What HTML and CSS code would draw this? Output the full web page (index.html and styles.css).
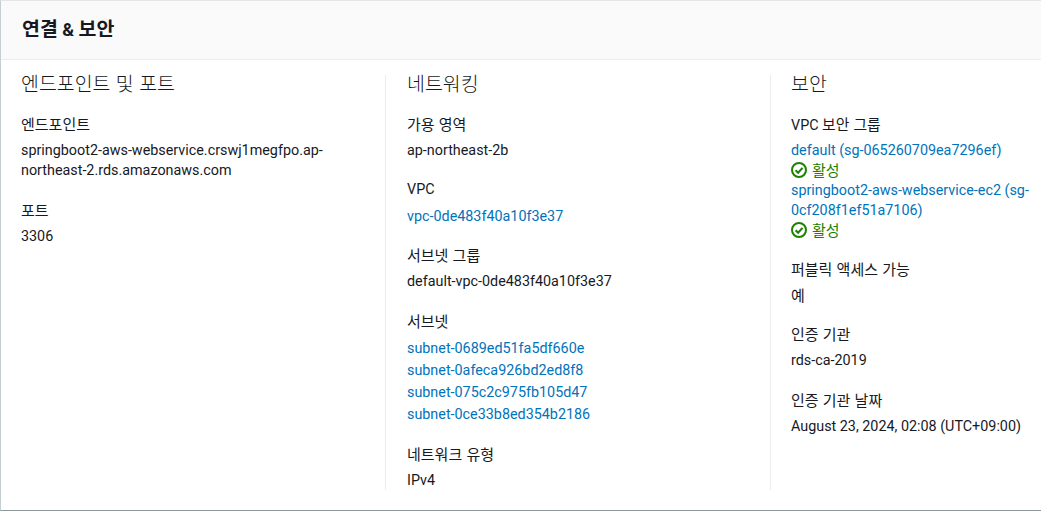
FILE: index.html
```html
<!DOCTYPE html>
<html lang="ko">
<head>
<meta charset="utf-8">
<title>연결 &amp; 보안</title>
<link rel="stylesheet" href="styles.css">
</head>
<body>
<section class="card">
  <header class="card-header"><h2><span class="ko">연결</span> &amp; <span class="ko">보안</span></h2></header>
  <div class="columns">
    <div class="col col-1">
      <h3><span class="ko">엔드포인트 및 포트</span></h3>
      <div class="field"><div class="label ko">엔드포인트</div><div class="value">springboot2-aws-webservice.crswj1megfpo.ap-northeast-2.rds.amazonaws.com</div></div>
      <div class="field"><div class="label ko">포트</div><div class="value">3306</div></div>
    </div>
    <div class="col col-2">
      <h3><span class="ko">네트워킹</span></h3>
      <div class="field"><div class="label ko">가용 영역</div><div class="value">ap-northeast-2b</div></div>
      <div class="field"><div class="label">VPC</div><div class="value"><a href="#">vpc-0de483f40a10f3e37</a></div></div>
      <div class="field"><div class="label ko">서브넷 그룹</div><div class="value">default-vpc-0de483f40a10f3e37</div></div>
      <div class="field"><div class="label ko">서브넷</div><div class="value">
        <div class="subnet"><a href="#">subnet-0689ed51fa5df660e</a></div>
        <div class="subnet"><a href="#">subnet-0afeca926bd2ed8f8</a></div>
        <div class="subnet"><a href="#">subnet-075c2c975fb105d47</a></div>
        <div class="subnet"><a href="#">subnet-0ce33b8ed354b2186</a></div>
      </div></div>
      <div class="field"><div class="label ko">네트워크 유형</div><div class="value">IPv4</div></div>
    </div>
    <div class="col col-3">
      <h3><span class="ko">보안</span></h3>
      <div class="field"><div class="label">VPC <span class="ko">보안 그룹</span></div><div class="value">
        <div><a href="#">default (sg-065260709ea7296ef)</a></div>
        <div class="status"><svg viewBox="0 0 16 16" width="16" height="16"><circle cx="8" cy="8" r="7" fill="none" stroke="#1d8102" stroke-width="2"/><path d="M4.6 8.2 7.1 10.7 11.5 5.8" fill="none" stroke="#1d8102" stroke-width="2"/></svg><span class="ko">활성</span></div>
        <div><a href="#">springboot2-aws-webservice-ec2 (sg-0cf208f1ef51a7106)</a></div>
        <div class="status"><svg viewBox="0 0 16 16" width="16" height="16"><circle cx="8" cy="8" r="7" fill="none" stroke="#1d8102" stroke-width="2"/><path d="M4.6 8.2 7.1 10.7 11.5 5.8" fill="none" stroke="#1d8102" stroke-width="2"/></svg><span class="ko">활성</span></div>
      </div></div>
      <div class="field"><div class="label ko">퍼블릭 액세스 가능</div><div class="value ko">예</div></div>
      <div class="field"><div class="label ko">인증 기관</div><div class="value">rds-ca-2019</div></div>
      <div class="field"><div class="label ko">인증 기관 날짜</div><div class="value">August 23, 2024, 02:08 (UTC+09:00)</div></div>
    </div>
  </div>
</section>
</body>
</html>
```
FILE: styles.css
```css
* { box-sizing: border-box; }
html, body { margin: 0; padding: 0; background: #fff; }
body {
  width: 1041px;
  height: 511px;
  overflow: hidden;
  font-family: Roboto, "Noto Sans CJK KR", sans-serif;
  font-size: 14.35px;
  line-height: 20px;
  color: #16191f;
}
.card {
  height: 511px;
  border-top: 1px solid #e3e6e6;
  border-left: 1px solid #c5cfd2;
  border-bottom: 1px solid #8d9699;
  overflow: hidden;
}
.card-header {
  height: 59px;
  background: #fafafa;
  border-bottom: 1px solid #eaeded;
  padding: 17px 21px 0;
}
.card-header h2 {
  margin: 0;
  font-size: 18px;
  line-height: 20px;
  font-weight: 700;
}
.ko { font-size: 1.08em; font-family: "Noto Sans CJK KR", sans-serif; }
.label.ko, .value.ko, .status .ko { font-size: 15px; }
.label .ko { font-size: 14.8px; }
.columns { display: flex; height: 415px; margin-top: 15px; }
.col { flex: none; height: 100%; padding-left: 20px; }
.col-1 { width: 384px; padding-right: 40px; }
.col-2 { width: 385px; border-left: 1px solid #eaeded; padding-left: 21px; padding-right: 20px; }
.col-3 { flex: 1; border-left: 1px solid #eaeded; padding-right: 0; }
h3 {
  height: 16px;
  margin: 0 0 23px;
  font-size: 18px;
  line-height: 16px;
  font-weight: 300;
}
.field { margin-bottom: 18.6px; }
.label { height: 20px; margin-bottom: 7px; }
.value.ko { height: 20px; line-height: 18px; }
.subnet { line-height: 22px; }
a { color: #0073bb; text-decoration: none; }
.status { display: flex; align-items: center; gap: 5px; height: 20px; margin-top: -1px; color: #1d8102; }
.status + div { margin-top: 1px; }
```
